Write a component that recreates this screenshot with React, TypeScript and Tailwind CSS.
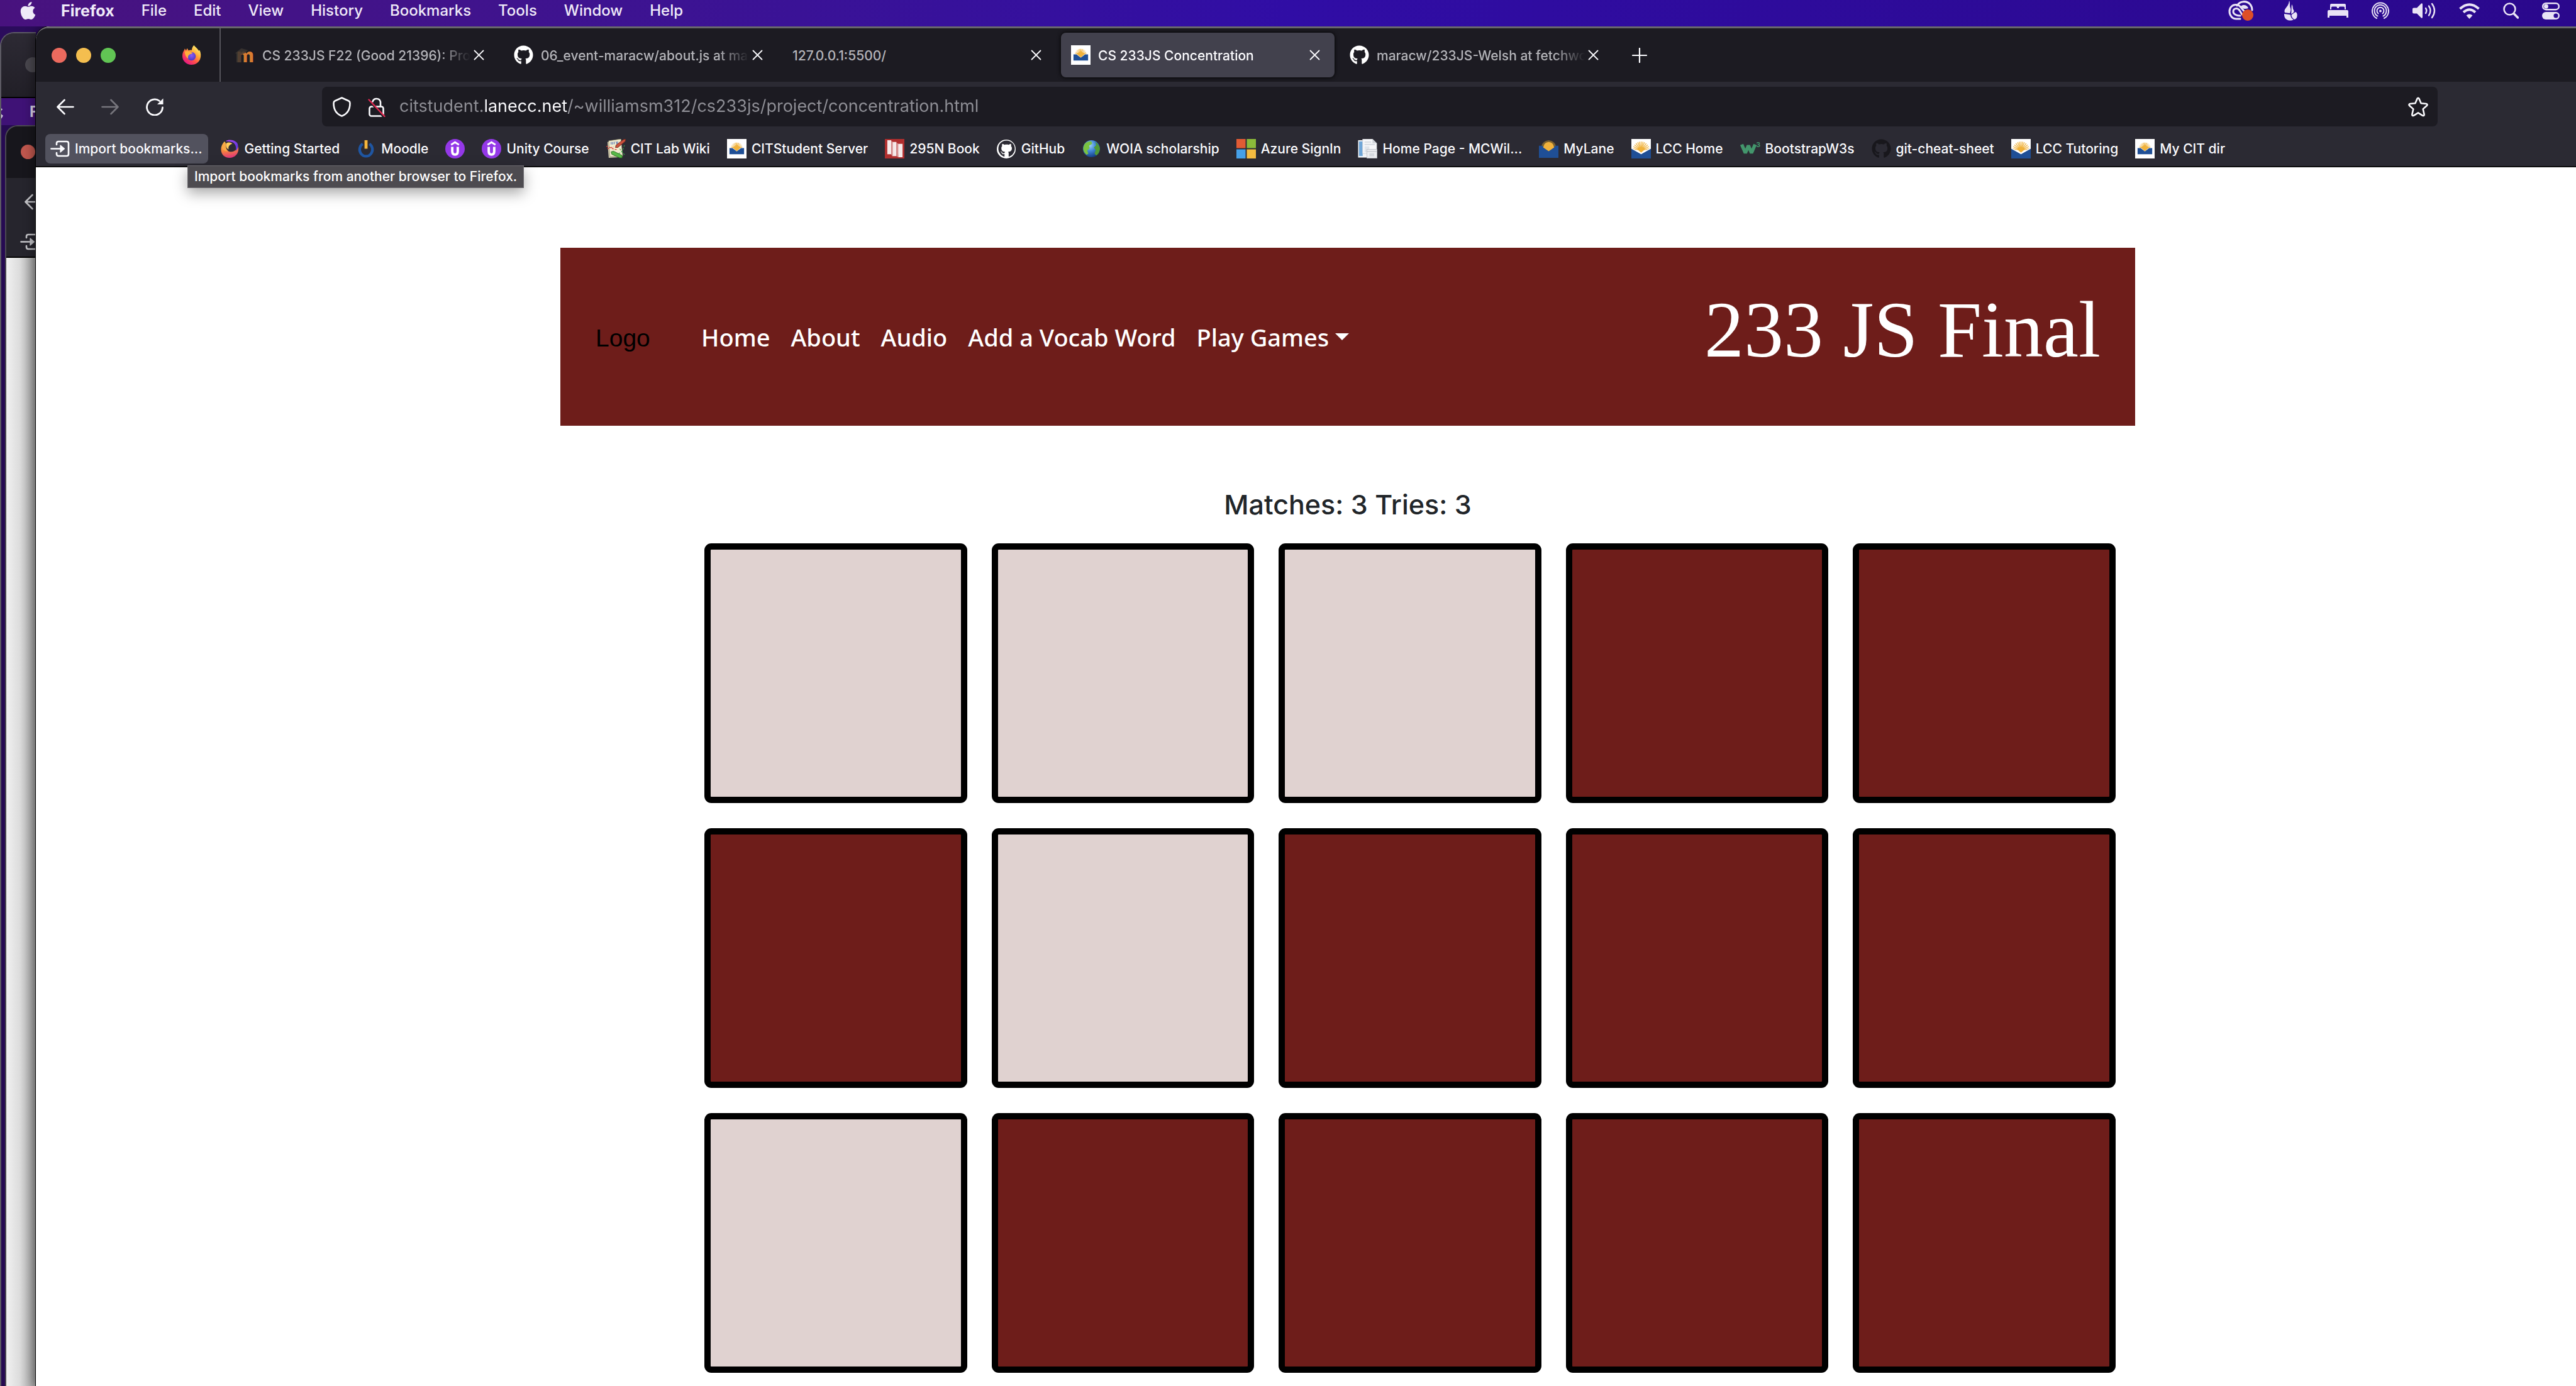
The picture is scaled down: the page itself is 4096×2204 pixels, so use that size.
import React from 'react';
import { FaApple, FaGithub } from 'react-icons/fa';

/* ---------- Menu bar icons ---------- */

function CreativeCloudIcon() {
  return (
    <svg viewBox="0 0 40 32" className="h-[32px] w-[40px]" fill="none" stroke="#e9e3f5" strokeWidth="3" strokeLinecap="round">
      <path d="M14 8 C18 1 29 -1 35 6 C37 8.500 38 12 38 15" />
      <path d="M19 29 H13 C6 29 2 23 2 17 C2 11 6.500 6.500 12 6.500 C15.500 6.500 18 8 20 10.500 L27 19" />
      <path d="M19 24 C12 24 8 21 8 17.500 C8 14 10.500 12.500 13 12.500 C15 12.500 16.500 13.500 18 15.500 L22 22" />
      <path d="M20 9 C24 5.500 30 7 32 12 C29 13 25 13.500 23 12" fill="#e9e3f5" stroke="none" />
      <circle cx="31" cy="23" r="9" fill="#dd4f27" stroke="none" />
    </svg>
  );
}

function FlameIcon() {
  return (
    <svg viewBox="0 0 44 32" className="h-[32px] w-[44px]" fill="#e9e3f5">
      <path d="M20 0 C22 5 20 8 22 12 C23 15 22 17 21 20 L13 19 C11 14 16 11 18 7 C19.500 4 19.500 2 20 0 Z" />
      <path d="M24 6 C26.500 9 25 12 27 15 C28.500 17 27 20 23 21 C24 16 23 12 24 6 Z" />
      <path d="M12 21 L22 22.500 C22 26 24 29 27 30 C24 32 19 32 16 30 C12.500 28 12 24 12 21 Z" />
      <path d="M23.500 22.500 L30 18 C32.500 19 33 22 32.500 25 C32 28 30.500 29 28.500 30 C25.500 28.500 23.500 26 23.500 22.500 Z" />
    </svg>
  );
}

function BedIcon() {
  return (
    <svg viewBox="0 0 33 24" className="h-[24px] w-[33px]" fill="#e9e3f5">
      <path d="M4 10 V3 Q4 1 6 1 H27 Q29 1 29 3 V10 H27 V7 Q27 5.500 25.500 5.500 H19.500 Q18 5.500 18 7 V8 H15 V7 Q15 5.500 13.500 5.500 H7.500 Q6 5.500 6 7 V10 Z" />
      <path d="M0 13 Q0 11 2 11 H31 Q33 11 33 13 V23 H30 V20 H3 V23 H0 Z" />
    </svg>
  );
}

function BroadcastIcon() {
  return (
    <svg viewBox="0 0 28 28" className="h-[28px] w-[28px]" fill="none" stroke="#e9e3f5" strokeWidth="2" strokeLinecap="round">
      <path d="M8 26 A13 13 0 1 1 20 26" />
      <path d="M9.500 22.500 A9.500 9.500 0 1 1 18.500 22.500" />
      <path d="M10.500 18.500 A5.500 5.500 0 1 1 17.500 18.500" />
      <circle cx="14" cy="14.500" r="2" fill="#e9e3f5" stroke="none" />
    </svg>
  );
}

function SpeakerIcon() {
  return (
    <svg viewBox="0 0 37 26" className="h-[26px] w-[37px]" fill="none" stroke="#e9e3f5" strokeWidth="2.4" strokeLinecap="round">
      <path d="M2 8.500 H7 L14 1.500 Q16 0.500 16 3 V23 Q16 25.500 14 24.500 L7 17.500 H2 Q0 17.500 0 15.500 V10.500 Q0 8.500 2 8.500 Z" fill="#e9e3f5" stroke="none" />
      <path d="M21 9 Q23.500 13 21 17" />
      <path d="M26 5.500 Q31 13 26 20.500" />
      <path d="M31 2 Q39 13 31 24" />
    </svg>
  );
}

function WifiIcon() {
  return (
    <svg viewBox="0 0 33 25" className="h-[25px] w-[33px]" fill="none" stroke="#e9e3f5" strokeWidth="4">
      <path d="M1.500 9 Q16.500 -4.500 31.500 9" />
      <path d="M7 14.500 Q16.500 6 26 14.500" />
      <path d="M16.500 25 L11.500 19.500 Q16.500 15.500 21.500 19.500 Z" fill="#e9e3f5" stroke="none" />
    </svg>
  );
}

function SpotlightIcon() {
  return (
    <svg viewBox="0 0 25 26" className="h-[26px] w-[25px]" fill="none" stroke="#e9e3f5" strokeLinecap="round">
      <circle cx="10.500" cy="10.500" r="9" strokeWidth="2.600" />
      <path d="M17.500 18 L23.500 24" strokeWidth="3.600" />
    </svg>
  );
}

function ControlCenterIcon() {
  return (
    <svg viewBox="0 0 28 27" className="h-[27px] w-[28px]">
      <rect x="1.200" y="1.200" width="25.600" height="10" rx="5" fill="none" stroke="#e9e3f5" strokeWidth="2.400" />
      <circle cx="6.500" cy="6.200" r="3.400" fill="#e9e3f5" />
      <rect x="0" y="15" width="28" height="12" rx="6" fill="#e9e3f5" />
      <circle cx="22" cy="21" r="3.600" fill="#2b0a92" />
    </svg>
  );
}

/* ---------- Toolbar icons ---------- */

function ArrowIcon({ className, flip }: { className?: string; flip?: boolean }) {
  return (
    <svg viewBox="0 0 28 28" className={className} fill="none" stroke="currentColor" strokeWidth="2.6" strokeLinecap="round" strokeLinejoin="round">
      {flip ? <path d="M1.500 14 H26 M15.500 3 L26.500 14 L15.500 25" /> : <path d="M26.500 14 H2 M12.500 3 L1.500 14 L12.500 25" />}
    </svg>
  );
}

function ReloadIcon() {
  return (
    <svg viewBox="0 0 28 28" className="size-[28px]" fill="none" stroke="#fbfbfe" strokeWidth="2.800" strokeLinecap="round">
      <path d="M26.500 15 A12.500 12.500 0 1 1 21.500 4.500" />
      <path d="M27.500 0.500 V10 H18 Z" fill="#fbfbfe" stroke="none" />
    </svg>
  );
}

function ShieldIcon() {
  return (
    <svg viewBox="0 0 29 32" className="h-[32px] w-[29px]" fill="none" stroke="#fbfbfe" strokeWidth="2.600" strokeLinejoin="round">
      <path d="M14.500 1.500 L25.500 6.500 Q27.500 7.500 27.500 10 C27.500 19 24 27 14.500 30.500 C5 27 1.500 19 1.500 10 Q1.500 7.500 3.500 6.500 Z" />
    </svg>
  );
}

function InsecureLockIcon() {
  return (
    <svg viewBox="0 0 28 32" className="h-[32px] w-[28px]" fill="none" strokeLinecap="round">
      <rect x="2.500" y="15.500" width="22" height="15" rx="3" stroke="#fbfbfe" strokeWidth="2.600" />
      <path d="M7.500 7.500 A6.500 6.500 0 0 1 20 8 V15" stroke="#fbfbfe" strokeWidth="2.600" />
      <path d="M0 4 L25 32" stroke="#1c1b22" strokeWidth="3" />
      <path d="M1.500 4.500 L26.500 31" stroke="#e22850" strokeWidth="2.400" />
    </svg>
  );
}

function StarIcon() {
  return (
    <svg viewBox="0 0 32 32" className="size-[32px]" fill="none" stroke="#fbfbfe" strokeWidth="2.600" strokeLinejoin="round">
      <path d="M14.600 2.800 Q16 0.600 17.400 2.800 L20.600 10.200 L28.800 11 Q31.600 11.600 29.800 14 L23.700 19.400 L25.600 27.800 Q25.800 30.600 23.200 29.800 L16 25.400 L8.800 29.800 Q6.200 30.600 6.400 27.800 L8.300 19.400 L2.200 14 Q0.400 11.600 3.200 11 L11.400 10.200 Z" />
    </svg>
  );
}

function CloseIcon() {
  return (
    <svg viewBox="0 0 17 17" className="size-[17px]" fill="none" stroke="#fbfbfe" strokeWidth="1.800" strokeLinecap="round">
      <path d="M1.500 1.500 L15.500 15.500 M15.500 1.500 L1.500 15.500" />
    </svg>
  );
}

/* ---------- Site icons ---------- */

function ImportIcon() {
  return (
    <svg viewBox="0 0 31 31" className="size-[31px] shrink-0" fill="none" stroke="currentColor" strokeWidth="2.600" strokeLinecap="round" strokeLinejoin="round">
      <path d="M10 9 V7 Q10 4 13 4 H26 Q29 4 29 7 V24 Q29 27 26 27 H13 Q10 27 10 24 V22" />
      <path d="M1.500 15.500 H18" />
      <path d="M16 10 L22.500 15.500 L16 21 Z" fill="currentColor" strokeWidth="1.200" />
    </svg>
  );
}

function FirefoxIcon() {
  return (
    <svg viewBox="0 0 32 32" className="size-[31px] shrink-0">
      <defs>
        <linearGradient id="fx-a" x1="0.850" y1="0.100" x2="0.200" y2="0.950">
          <stop offset="0" stopColor="#fff36e" />
          <stop offset="0.350" stopColor="#ffa436" />
          <stop offset="0.650" stopColor="#ff4f4b" />
          <stop offset="1" stopColor="#e31587" />
        </linearGradient>
        <radialGradient id="fx-b" cx="0.500" cy="0.400" r="0.600">
          <stop offset="0" stopColor="#8d5cf5" />
          <stop offset="1" stopColor="#4a38c4" />
        </radialGradient>
      </defs>
      <path d="M20 0 C22 3 26 5 28 9 L29.500 8 C31.500 13 32 18 30 23 C27.500 29 22 32 16 32 C8 32 1 26 1 17.500 C1 13 2.500 10 4 8 L5 5.500 L7 8.500 L9 5 L11 8.500 C13 7.500 15 7.500 16.500 8 C16.500 5 18 2 20 0 Z" fill="url(#fx-a)" />
      <circle cx="16" cy="18" r="7" fill="url(#fx-b)" />
      <path d="M5 10 C8 9 12 9.500 14 11 L18 12.500 C17 14.500 14 14 12.500 15.500 C10 17 10 20 11 22 C7 20 5 15 5 10 Z" fill="#ffb03a" />
    </svg>
  );
}

function FirefoxSwirlIcon() {
  return (
    <svg viewBox="0 0 32 32" className="size-[31px] shrink-0">
      <defs>
        <linearGradient id="sw-a" x1="0.300" y1="0" x2="0.500" y2="1">
          <stop offset="0" stopColor="#ffc04a" />
          <stop offset="0.550" stopColor="#f6803f" />
          <stop offset="1" stopColor="#e0357c" />
        </linearGradient>
        <linearGradient id="sw-b" x1="0" y1="0" x2="1" y2="1">
          <stop offset="0" stopColor="#b44bf0" />
          <stop offset="1" stopColor="#4a32d8" />
        </linearGradient>
      </defs>
      <path d="M7 4 C10 6 9 10 9.500 12 C10 18 14 21.500 19 21 C25 20 28 16 29 12 L30 15 C31 24 24 31 15.500 31 C7 31 1.500 25 1.500 17 C1.500 12 3.500 8 7 4 Z" fill="url(#sw-a)" />
      <path d="M9 3.500 C14 0 23 1 27.500 6 C31 11 29.500 17 25.500 19.500 C27 14 25.500 8 20.500 5.500 C17 4 12 4 9 3.500 Z" fill="url(#sw-b)" />
      <path d="M10 7 C14 4.500 19 6 20 8 C15 9 13 13 14 17 C10.500 16 8.500 11 10 7 Z" fill="#ffca5e" />
      <path d="M3 13 C3 9 6 6 9 6 C8 11 9 17 13 20 C8 21 4 18 3 13 Z" fill="#f9a845" />
    </svg>
  );
}

function MoodleHatIcon() {
  return (
    <svg viewBox="0 0 32 32" className="size-[31px] shrink-0">
      <text x="2" y="28" fontFamily="Inter, sans-serif" fontWeight="800" fontSize="31" fill="#d87c31">m</text>
      <path d="M0 13 L10 5 L21 8 L16 13 L10 15 V28 H2 V14 Z" fill="#3b3531" fillOpacity="0.850" />
    </svg>
  );
}

function MoodlePowerIcon() {
  return (
    <svg viewBox="0 0 32 32" className="size-[31px] shrink-0" fill="none">
      <path d="M10 8 A10.500 11 0 1 0 21 8" stroke="#1f56a3" strokeWidth="4.400" />
      <path d="M15.500 2 V16" stroke="#f5b63c" strokeWidth="5" />
    </svg>
  );
}

function UdemyIcon() {
  return (
    <svg viewBox="0 0 32 32" className="size-[31px] shrink-0">
      <circle cx="16" cy="16" r="16" fill="#9438e8" />
      <path d="M9.500 9.500 L16 5.500 L22.500 9.500" fill="none" stroke="#fff" strokeWidth="3" />
      <path d="M11.500 13 V20 Q11.500 25.500 16 25.500 Q20.500 25.500 20.500 20 V13" fill="none" stroke="#fff" strokeWidth="4" />
    </svg>
  );
}

function WikiIcon() {
  return (
    <svg viewBox="0 0 32 32" className="size-[31px] shrink-0">
      <path d="M2 5 L20 2 L22 30 L4 31 Z" fill="#cfc9ac" />
      <path d="M4 3 L24 0 L27 28 L6 29 Z" fill="#f1eccf" stroke="#8f8a6a" strokeWidth="0.700" />
      <path d="M8 5 V9 M10.500 5 V9 M13 4.500 V8.500 M16 4 L17.500 8 L19 4" stroke="#5b78b8" strokeWidth="1.200" fill="none" />
      <path d="M0 12 C6 12 10 18 18 17 M2 16 L12 13" stroke="#d9413a" strokeWidth="1.400" fill="none" strokeDasharray="3 2" />
      <path d="M20 24 C28 22 28 14 30 10 M22 16 L30 26" stroke="#3aa54b" strokeWidth="1.200" fill="none" strokeDasharray="3 2" />
      <path d="M15 14 L16 10 L28 1 L32 0 L31 4 L19 14 Z" fill="#c8503c" stroke="#6d241a" strokeWidth="0.900" />
      <path d="M8 21 L12 20 L26 27 L26 31 L22 31 L9 25 Z" fill="#57b847" stroke="#256b1d" strokeWidth="0.900" />
    </svg>
  );
}

const rays = [-165, -152, -139, -126, -113, -102, -90, -78, -67, -54, -41, -28, -15];

function LaneIcon({ variant }: { variant: 'full' | 'small' | 'dark' }) {
  const small = variant === 'small';
  const cy = small ? 19 : 22.5;
  const len = small ? 12 : 18;
  return (
    <svg viewBox="0 0 32 32" className="size-[31px] shrink-0">
      {variant !== 'dark' && <rect width="32" height="32" fill="#fff" />}
      {variant === 'dark' ? (
        <>
          <path d="M4 12 Q6 3 16 2 Q26 3 28 12 L16 20 Z" fill="#7a6130" />
          <path d="M0 11 H5 L16 20 L27 11 H32 V31 H0 Z" fill="#1f4f96" />
          <path d="M8 11 Q9 6 16 5 Q23 6 24 11 L25 14 L16 20 L7 14 Z" fill="#f0b23c" />
        </>
      ) : (
        <>
          {rays.map((a) => {
            const r = (a * Math.PI) / 180;
            return (
              <line
                key={a}
                x1="16"
                y1={cy - 3}
                x2={16 + Math.cos(r) * len * 0.8}
                y2={cy - 3 + Math.sin(r) * len * 0.85}
                stroke="#f0b23c"
                strokeWidth={small ? 1 : 1.3}
              />
            );
          })}
          {small ? (
            <>
              <path d="M9 14 Q16 8 23 14 L16 20 Z" fill="#f0b23c" />
              <path d="M4 15 L9 15 L16 20.500 L23 15 H28 V25 H4 Z" fill="#1f4f96" />
            </>
          ) : (
            <>
              <path d="M0 14 L16 23.500 L32 14 V18 H0 Z" fill="#fff" />
              <path d="M9 16.500 Q16 9 23 16.500 L16 22.500 Z" fill="#f0b23c" />
              <path d="M0 16 L16 25 L32 16 V32 H0 Z" fill="#1f4f96" />
            </>
          )}
        </>
      )}
    </svg>
  );
}

function BookIcon() {
  return (
    <svg viewBox="0 0 32 32" className="size-[31px] shrink-0">
      <rect width="32" height="32" fill="#b12f2f" />
      <path d="M4 2 H10.500 V25 H4 Z M12 5 H19 V28 H12 Z M21 8 H29 V30 H22 Z" fill="#f6eaea" />
      <path d="M10.500 3 L13 5 V28 L10.500 26 Z M19 6 L22 8 V30 L19 28 Z" fill="#d58e8e" />
    </svg>
  );
}

function GithubRoundIcon() {
  return (
    <span className="grid size-[31px] shrink-0 place-items-center">
      <span className="grid size-[30px] place-items-center rounded-full bg-white">
        <FaGithub className="size-[27px] text-[#2b2a33]" />
      </span>
    </span>
  );
}

function GlobeIcon() {
  return (
    <svg viewBox="0 0 32 32" className="size-[31px] shrink-0">
      <defs>
        <radialGradient id="gl" cx="0.400" cy="0.300" r="0.700">
          <stop offset="0" stopColor="#9fd3f7" />
          <stop offset="0.500" stopColor="#3f84d4" />
          <stop offset="1" stopColor="#153f86" />
        </radialGradient>
      </defs>
      <circle cx="16" cy="16" r="14" fill="url(#gl)" />
      <path d="M5 8 Q10 3 16 4 L17 8 L12 11 L13 15 L9 19 L11 24 L8 26 Q1 20 3 12 Z" fill="#7ac242" />
      <path d="M22 5 Q29 9 30 16 Q29 24 24 27 L21 24 L23 18 L20 14 L24 10 Z" fill="#4f9a37" />
    </svg>
  );
}

function AzureIcon() {
  return (
    <svg viewBox="0 0 32 32" className="size-[31px] shrink-0">
      <rect width="15" height="15" fill="#e15b34" />
      <rect x="17" width="15" height="15" fill="#8bb93a" />
      <rect y="17" width="15" height="15" fill="#46a0e7" />
      <rect x="17" y="17" width="15" height="15" fill="#f4bb40" />
    </svg>
  );
}

function PagesIcon() {
  return (
    <svg viewBox="0 0 32 32" className="size-[31px] shrink-0">
      <rect x="0.500" y="2" width="20" height="28.500" fill="#f3f5f8" />
      <rect x="2" y="4" width="6" height="24" fill="#6fa6d8" />
      <path d="M8 0 H24 L31 7 V24 H8 Z" fill="#f7f8fa" stroke="#c9ccd2" strokeWidth="0.800" />
      <path d="M24 0 V7 H31 Z" fill="#cfd3d9" />
      <path d="M11 5 H22 M11 9 H28" stroke="#d3d8df" strokeWidth="2" />
      <rect x="11" y="12" width="8" height="10" fill="#dfe4ea" />
      <rect x="15" y="17" width="16.500" height="14.500" fill="#eceef1" stroke="#b8bcc3" strokeWidth="0.800" />
      <path d="M15 20.500 H31.500" stroke="#b8bcc3" />
      <rect x="19" y="23.500" width="8" height="5" fill="#d5d9df" />
    </svg>
  );
}

function W3Icon() {
  return (
    <svg viewBox="0 0 33 32" className="h-[31px] w-[32px] shrink-0">
      <path d="M2.500 9 L8.500 23 L13.500 11 L18.500 23 L24.500 9" fill="none" stroke="#43966c" strokeWidth="5.600" strokeLinejoin="bevel" />
      <text x="26" y="13" fontFamily="Inter, sans-serif" fontWeight="700" fontSize="11" fill="#43966c">3</text>
    </svg>
  );
}

/* ---------- Page data ---------- */

const menus = ['File', 'Edit', 'View', 'History', 'Bookmarks', 'Tools', 'Window', 'Help'];

const tabs: { title: string; icon?: React.ReactNode; active?: boolean }[] = [
  { title: 'CS 233JS F22 (Good 21396): Pro', icon: <MoodleHatIcon /> },
  { title: '06_event-maracw/about.js at ma', icon: <FaGithub className="size-[31px] shrink-0 text-white" /> },
  { title: '127.0.0.1:5500/' },
  { title: 'CS 233JS Concentration', icon: <LaneIcon variant="small" />, active: true },
  { title: 'maracw/233JS-Welsh at fetchwo', icon: <FaGithub className="size-[31px] shrink-0 text-white" /> },
];

const bookmarks: { label: string; icon: React.ReactNode }[] = [
  { label: 'Getting Started', icon: <FirefoxSwirlIcon /> },
  { label: 'Moodle', icon: <MoodlePowerIcon /> },
  { label: '', icon: <UdemyIcon /> },
  { label: 'Unity Course', icon: <UdemyIcon /> },
  { label: 'CIT Lab Wiki', icon: <WikiIcon /> },
  { label: 'CITStudent Server', icon: <LaneIcon variant="small" /> },
  { label: '295N Book', icon: <BookIcon /> },
  { label: 'GitHub', icon: <GithubRoundIcon /> },
  { label: 'WOIA scholarship', icon: <GlobeIcon /> },
  { label: 'Azure SignIn', icon: <AzureIcon /> },
  { label: 'Home Page - MCWil...', icon: <PagesIcon /> },
  { label: 'MyLane', icon: <LaneIcon variant="dark" /> },
  { label: 'LCC Home', icon: <LaneIcon variant="full" /> },
  { label: 'BootstrapW3s', icon: <W3Icon /> },
  { label: 'git-cheat-sheet', icon: <FaGithub className="size-[31px] shrink-0 text-[#18171c]" /> },
  { label: 'LCC Tutoring', icon: <LaneIcon variant="full" /> },
  { label: 'My CIT dir', icon: <LaneIcon variant="small" /> },
];

const matched = [0, 1, 2, 6, 10];

/* ---------- Sections ---------- */

function MenuBar() {
  return (
    <header className="relative z-10 flex h-[42px] items-center justify-between bg-linear-to-r from-[#48127e] via-[#300da5] to-[#2a088c] pr-[26px] pb-[8px] pl-[31px] text-[24px] leading-[30px] font-medium text-[#efeaf8]">
      <nav className="flex items-center gap-[43px] text-shadow-md">
        <button aria-label="Apple menu" className="-mr-1">
          <FaApple className="h-[32px] w-[27px]" />
        </button>
        <button className="text-[25px] font-bold">Firefox</button>
        {menus.map((m) => (
          <button key={m}>{m}</button>
        ))}
      </nav>
      <div className="flex items-center gap-[37px]">
        <CreativeCloudIcon />
        <FlameIcon />
        <BedIcon />
        <BroadcastIcon />
        <SpeakerIcon />
        <WifiIcon />
        <SpotlightIcon />
        <ControlCenterIcon />
      </div>
    </header>
  );
}

function BackgroundWindows() {
  return (
    <div aria-hidden="true" className="absolute inset-y-0 left-0 w-[57px] overflow-hidden bg-[#2b0c5c]">
      <div className="absolute inset-x-0 top-[9px] bottom-0 flex flex-col overflow-hidden rounded-tl-[22px] border-t-2 border-l-2 border-[#5c5a63] bg-[#260a52]">
        <div className="h-[101px] shrink-0 bg-linear-to-b from-[#2d2a34] to-[#211f27] pt-[38px] pl-[38px]">
          <div className="size-[24px] rounded-full bg-[#49474e]" />
        </div>
        <div className="flex h-[45px] shrink-0 items-center border-t-2 border-black bg-[#3f1276] text-[24px] font-bold text-[#d9d2e6]">
          <FaApple className="-ml-[21px] h-[28px] w-[27px] shrink-0" />
          <span className="ml-[39px]">F</span>
        </div>
        <div className="ml-[6px] flex flex-1 flex-col overflow-hidden rounded-tl-[20px] border-t-2 border-l-2 border-[#4b4a51] bg-[#26252d]">
          <div className="h-[82px] bg-[#17161c] pt-[29px] pl-[23px]">
            <div className="size-[23px] rounded-full bg-[#c0574e]" />
          </div>
          <div className="flex h-[127px] flex-col gap-[34px] border-b-2 border-black pt-[24px] pl-[22px] text-[#c4c4c8]">
            <ArrowIcon className="ml-[7px] size-[28px] shrink-0" />
            <ImportIcon />
          </div>
          <div className="flex-1 bg-linear-to-r from-[#f1f1f1] from-0% via-[#dcdcdc] via-45% to-[#9c9c9c]" />
        </div>
      </div>
    </div>
  );
}

function TabStrip() {
  return (
    <div className="flex h-[85px] items-center bg-[#1c1b22] text-[21px] leading-[26px] font-medium">
      <div className="flex w-[294px] items-center justify-between self-stretch border-r-2 border-[#55545b] pr-[29px] pl-[25px]">
        <div className="flex gap-[15px]">
          <button aria-label="Close window" className="size-[24px] rounded-full bg-[#ec6a5e]" />
          <button aria-label="Minimise window" className="size-[24px] rounded-full bg-[#f4be4f]" />
          <button aria-label="Zoom window" className="size-[24px] rounded-full bg-[#61c554]" />
        </div>
        <FirefoxIcon />
      </div>
      <div className="flex gap-2 pl-[7px]">
        {tabs.map((t) => (
          <div
            key={t.title}
            className={
              t.active
                ? 'flex h-[71px] w-[435px] items-center rounded-lg bg-[#42414d] pr-[23px] pl-4 text-[#fbfbfe] shadow-[0_0_6px_#000]'
                : 'flex h-[71px] w-[435px] items-center rounded-lg pr-[23px] pl-4 text-[#b4b4b9]'
            }
          >
            {t.icon}
            <button
              className={
                t.icon
                  ? 'ml-[12px] flex-1 overflow-hidden mask-r-from-85% pt-[2px] text-left whitespace-nowrap'
                  : 'flex-1 overflow-hidden pt-[2px] text-left whitespace-nowrap'
              }
            >
              {t.title}
            </button>
            <button aria-label={'Close ' + t.title} className="ml-[5px]">
              <CloseIcon />
            </button>
          </div>
        ))}
      </div>
      <button aria-label="New tab" className="ml-[30px]">
        <svg viewBox="0 0 24 24" className="size-[24px]" stroke="#fbfbfe" strokeWidth="2.200" strokeLinecap="round">
          <path d="M12 1 V23 M1 12 H23" />
        </svg>
      </button>
    </div>
  );
}

function AddressRow() {
  return (
    <div className="flex h-[79px] items-center pr-[220px] pl-[33px]">
      <div className="flex w-[422px] gap-[43px]">
        <button aria-label="Back" className="text-[#fbfbfe]">
          <ArrowIcon className="size-[28px]" />
        </button>
        <button aria-label="Forward" className="text-[#76757c]">
          <ArrowIcon flip className="size-[28px]" />
        </button>
        <button aria-label="Reload">
          <ReloadIcon />
        </button>
      </div>
      <div className="flex h-[63px] flex-1 items-center rounded-lg bg-[#1c1b22] pr-[15px] pl-[17px]">
        <ShieldIcon />
        <span className="ml-[27px]">
          <InsecureLockIcon />
        </span>
        <input
          aria-label="Address"
          defaultValue="citstudent.lanecc.net/~williamsm312/cs233js/project/concentration.html"
          className="ml-[22px] h-[40px] flex-1 bg-[linear-gradient(90deg,#8f8f96_136px,#fbfbfe_136px,#fbfbfe_267px,#8f8f96_267px)] bg-clip-text text-[27px] text-transparent outline-none"
        />
        <button aria-label="Bookmark this page">
          <StarIcon />
        </button>
      </div>
    </div>
  );
}

function BookmarksBar() {
  return (
    <div className="flex h-[57px] items-center gap-[11px] border-b-2 border-[#0c0c0d] pr-4 pl-[15px] text-[21px] leading-[26px] font-medium text-[#fbfbfe]">
      <div className="relative">
        <button aria-describedby="import-tip" className="flex h-[47px] items-center gap-2 rounded-lg bg-[#52525e] pr-[9px] pl-2 whitespace-nowrap">
          <ImportIcon />
          Import bookmarks...
        </button>
        <div
          id="import-tip"
          role="tooltip"
          className="absolute top-[50px] left-[226px] z-10 flex h-[36px] items-center border border-[#6b696e] bg-[#4d4b50] px-[10px] whitespace-nowrap text-white shadow-[0_8px_22px_rgba(0,0,0,0.35)]"
        >
          Import bookmarks from another browser to Firefox.
        </div>
      </div>
      {bookmarks.map((b, i) => (
        <a key={i} href="#" aria-label={b.label || 'Udemy'} className="flex h-[47px] items-center gap-2 px-2 whitespace-nowrap">
          {b.icon}
          {b.label && <span>{b.label}</span>}
        </a>
      ))}
    </div>
  );
}

function SiteHeader() {
  return (
    <header className="flex h-[283px] items-center justify-between bg-[#6e1d1a] pr-[55px] pl-[56px] text-white">
      <div className="flex items-center">
        <a href="#" className="w-[168px] pt-[5px] font-['Liberation_Sans',sans-serif] text-[39px] leading-[48px] text-black">
          Logo
        </a>
        <nav className="flex items-center gap-[33px] font-['Noto_Sans',sans-serif] text-[38px] leading-[52px] font-medium">
          <a href="#">Home</a>
          <a href="#">About</a>
          <a href="#">Audio</a>
          <a href="#">Add a Vocab Word</a>
          <button className="flex items-center gap-[10px]">
            Play Games
            <svg viewBox="0 0 22 11" className="h-[11px] w-[22px]" fill="#fff">
              <path d="M0 0 H22 L11 11 Z" />
            </svg>
          </button>
        </nav>
      </div>
      <h1 className="pb-[22px] font-['Liberation_Serif',serif] text-[126px] leading-[150px]">233 JS Final</h1>
    </header>
  );
}

function Board() {
  return (
    <section className="grid grid-cols-5 gap-x-[39px] gap-y-[40px] pr-[31px] pl-[229px]">
      {Array.from({ length: 15 }, (_, i) => (
        <button
          key={i}
          aria-label={'Card ' + (i + 1)}
          className={
            matched.includes(i)
              ? 'h-[413px] rounded-[11px] border-[10px] border-black bg-[#e0d2d0]'
              : 'h-[413px] rounded-[11px] border-[10px] border-black bg-[#6e1d1a]'
          }
        />
      ))}
    </section>
  );
}

export default function App() {
  return (
    <div className="flex min-h-screen flex-col overflow-hidden bg-[#2b0c5c] font-[Inter,sans-serif]">
      <MenuBar />
      <div className="relative flex flex-1 flex-col pl-[57px]">
        <BackgroundWindows />
        <div className="relative flex flex-1 flex-col rounded-tl-[22px] bg-white shadow-[0_0_0_1px_#000,-4px_0_16px_rgba(0,0,0,0.4)]">
          <div className="rounded-tl-[22px] border-t-3 border-[#68676c] bg-[#2b2a33] *:first:rounded-tl-[19px]">
            <TabStrip />
            <AddressRow />
            <BookmarksBar />
          </div>
          <main className="flex flex-col pt-[128px] pr-[701px] pb-[19px] pl-[834px]">
            <SiteHeader />
            <h4 className="pt-[99px] pb-[36px] text-center text-[43px] leading-[52px] font-medium text-[#212529]">Matches: 3 Tries: 3</h4>
            <Board />
          </main>
        </div>
      </div>
    </div>
  );
}
